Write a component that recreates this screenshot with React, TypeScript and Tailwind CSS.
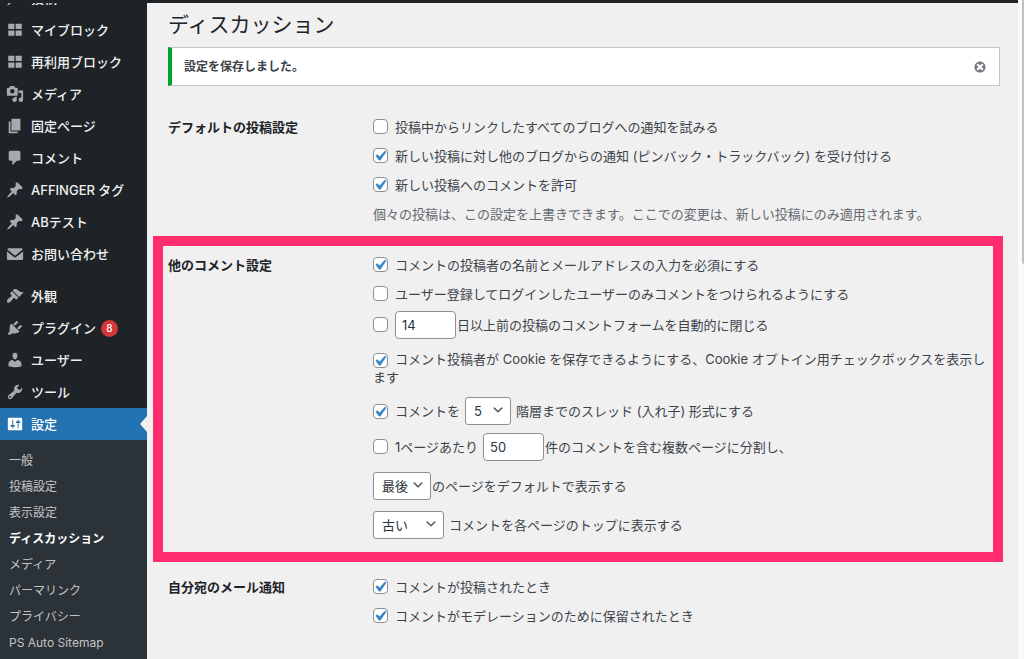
import type { ReactNode } from 'react';

const icons = {
  pin: 'M10.44 3.02l1.82-1.82 6.36 6.35-1.83 1.82c-1.05-.68-2.48-.57-3.41.36l-.75.75c-.92.93-1.04 2.35-.35 3.41l-1.83 1.82-2.41-2.41-2.8 2.79c-.42.42-3.38 2.71-3.8 2.29s1.86-3.39 2.28-3.81l2.79-2.79L4.1 9.36l1.83-1.82c1.05.69 2.48.57 3.4-.36l.75-.75c.93-.92 1.05-2.35.36-3.41z',
  blocks: 'M2.5 3h6.8v6H2.5zM10.7 3h6.8v6h-6.8zM2.5 10.5h6.8v6H2.5zM10.7 10.5h6.8v6h-6.8z',
  media:
    'M13 11V4c0-.55-.45-1-1-1h-1.67L9 1H5L3.67 3H2c-.55 0-1 .45-1 1v7c0 .55.45 1 1 1h10c.55 0 1-.45 1-1zM7 4.5c1.38 0 2.5 1.12 2.5 2.5S8.38 9.5 7 9.5 4.5 8.38 4.5 7 5.62 4.5 7 4.5zM14 6h5v10.5c0 1.38-1.12 2.5-2.5 2.5S14 17.88 14 16.5s1.12-2.5 2.5-2.5c.17 0 .34.02.5.05V9h-3V6zm-4 8.05V13h2v3.5c0 1.38-1.12 2.5-2.5 2.5S7 17.88 7 16.5 8.12 14 9.5 14c.17 0 .34.02.5.05z',
  page: 'M6 15V2h10v13H6zm-1 1h8v2H3V5h2v11z',
  comment: 'M5 2h9c1.1 0 2 .9 2 2v7c0 1.1-.9 2-2 2h-2l-5 5v-5H5c-1.1 0-2-.9-2-2V4c0-1.1.9-2 2-2z',
  mail: 'M3.5 3.5h13c1.1 0 2 .7 2 1.6L10 12 1.5 5.1c0-.9.9-1.6 2-1.6zM1 7.1l9 7.2 9-7.2v8.1c0 .9-.7 1.6-1.6 1.6H2.6c-.9 0-1.6-.7-1.6-1.6z',
  brush:
    'M14.48 11.06L7.41 3.99l1.5-1.5c.5-.56 2.3-.47 3.51.32 1.21.8 1.43 1.28 2.91 2.1 1.18.64 2.45 1.26 4.45.85zm-.71.71L6.7 4.7 4.93 6.47c-.39.39-.39 1.02 0 1.41l1.06 1.06c.39.39.39 1.03 0 1.42-.6.6-1.43 1.11-2.21 1.69-.35.26-.7.53-1.01.84C1.43 14.23.4 16.08 1.4 17.07c.99 1 2.84-.03 4.18-1.36.31-.31.58-.66.85-1.02.57-.78 1.08-1.61 1.69-2.21.39-.39 1.02-.39 1.41 0l1.06 1.06c.39.39 1.02.39 1.41 0z',
  plug: 'M13.11 4.36L9.87 7.6 8 5.73l3.24-3.24c.35-.34 1.05-.2 1.56.32.52.51.66 1.21.31 1.55zm-8 1.77l.91-1.12 9.01 9.01-1.19.84c-.71.71-2.63 1.16-3.82 1.16H6.14L4.9 17.26c-.59.59-1.54.59-2.12 0-.59-.58-.59-1.53 0-2.12l1.24-1.24v-3.88c0-1.13.4-3.19 1.09-3.89zm7.26 3.97l3.24-3.24c.34-.35 1.04-.21 1.55.31.52.51.66 1.21.31 1.55l-3.24 3.25z',
  user: 'M10 9.25c-2.27 0-2.73-3.44-2.73-3.44C7 4.02 7.82 2 9.97 2c2.16 0 2.98 2.02 2.71 3.81 0 0-.41 3.44-2.68 3.44zm0 2.57L12.72 10c2.39 0 4.52 2.33 4.52 4.53v2.49s-3.65 1.13-7.24 1.13c-3.65 0-7.24-1.13-7.24-1.13v-2.49c0-2.25 1.94-4.48 4.47-4.48z',
  wrench:
    'M16.68 9.77c-1.34 1.34-3.3 1.67-4.95.99l-5.41 6.52c-.99.99-2.59.99-3.58 0s-.99-2.59 0-3.57l6.52-5.42c-.68-1.65-.35-3.61.99-4.95 1.28-1.28 3.12-1.62 4.72-1.06l-2.89 2.89 2.82 2.82 2.86-2.87c.53 1.58.18 3.39-1.08 4.65zM3.81 16.21c.4.39 1.04.39 1.43 0 .4-.4.4-1.04 0-1.43-.39-.4-1.03-.4-1.43 0-.39.39-.39 1.03 0 1.43z',
  sliders:
    'M18 16V4c0-.55-.45-1-1-1H3c-.55 0-1 .45-1 1v12c0 .55.45 1 1 1h14c.55 0 1-.45 1-1zM8 11h1c.55 0 1 .45 1 1s-.45 1-1 1H8v1.5c0 .28-.22.5-.5.5s-.5-.22-.5-.5V13H6c-.55 0-1-.45-1-1s.45-1 1-1h1V5.5c0-.28.22-.5.5-.5s.5.22.5.5V11zm5-2h-1c-.55 0-1-.45-1-1s.45-1 1-1h1V5.5c0-.28.22-.5.5-.5s.5.22.5.5V7h1c.55 0 1 .45 1 1s-.45 1-1 1h-1v5.5c0 .28-.22.5-.5.5s-.5-.22-.5-.5V9z',
  dismiss:
    'M10 2c4.42 0 8 3.58 8 8s-3.58 8-8 8-8-3.58-8-8 3.58-8 8-8zm5 11l-3-3 3-3-2-2-3 3-3-3-2 2 3 3-3 3 2 2 3-3 3 3z',
};

type IconName = keyof typeof icons;

function Icon({ name, className }: { name: IconName; className: string }) {
  return (
    <svg viewBox="0 0 20 20" className={className} fill="currentColor" fillRule="evenodd" aria-hidden="true">
      <path d={icons[name]} />
    </svg>
  );
}

type MenuEntry = { icon: IconName; label: string; badge?: number };

const contentMenu: MenuEntry[] = [
  { icon: 'blocks', label: 'マイブロック' },
  { icon: 'blocks', label: '再利用ブロック' },
  { icon: 'media', label: 'メディア' },
  { icon: 'page', label: '固定ページ' },
  { icon: 'comment', label: 'コメント' },
  { icon: 'pin', label: 'AFFINGER タグ' },
  { icon: 'pin', label: 'ABテスト' },
  { icon: 'mail', label: 'お問い合わせ' },
];

const siteMenu: MenuEntry[] = [
  { icon: 'brush', label: '外観' },
  { icon: 'plug', label: 'プラグイン', badge: 8 },
  { icon: 'user', label: 'ユーザー' },
  { icon: 'wrench', label: 'ツール' },
];

const submenu = ['一般', '投稿設定', '表示設定', 'ディスカッション', 'メディア', 'パーマリンク', 'プライバシー', 'PS Auto Sitemap'];

function MenuItem({ icon, label, badge }: MenuEntry) {
  return (
    <a href="#" className="flex h-8 shrink-0 items-center pl-[6px] font-medium text-[#f0f0f1]">
      <Icon name={icon} className="mr-[7px] size-[18px] shrink-0 text-[#a7aaad]" />
      {label}
      {badge !== undefined && (
        <span className="ml-[5px] flex size-[17px] items-center justify-center rounded-full bg-[#d63638] text-[10px] text-white">
          {badge}
        </span>
      )}
    </a>
  );
}

function Sidebar() {
  return (
    <nav aria-label="メインメニュー" className="flex w-[147px] shrink-0 flex-col bg-[#1d2327]">
      <div className="flex h-[11px] flex-col justify-end overflow-hidden">
        <MenuItem icon="pin" label="投稿" />
      </div>
      {contentMenu.map((item) => (
        <MenuItem key={item.label} {...item} />
      ))}
      <div className="h-[10px]" />
      {siteMenu.map((item) => (
        <MenuItem key={item.label} {...item} />
      ))}
      <a href="#" className="relative flex h-8 items-center bg-[#2271b1] pl-[6px] font-medium text-white">
        <Icon name="sliders" className="mr-[7px] size-[18px] shrink-0" />
        設定
        <svg viewBox="0 0 7 16" className="absolute top-2 right-0 h-4 w-[7px]" fill="#f0f0f1" aria-hidden="true">
          <path d="M7 0v16L0 8z" />
        </svg>
      </a>
      <div className="flex grow flex-col bg-[#2c3338] pt-2 text-xs">
        {submenu.map((label) =>
          label === 'ディスカッション' ? (
            <a key={label} href="#" aria-current="page" className="flex h-[26px] items-center pl-[9px] font-bold text-white">
              {label}
            </a>
          ) : (
            <a key={label} href="#" className="flex h-[26px] items-center pl-[9px] text-[#c3c4c7]">
              {label}
            </a>
          ),
        )}
      </div>
    </nav>
  );
}

function Tick({ checked, label }: { checked?: boolean; label?: string }) {
  return (
    <span className="relative mr-[7px] inline-block size-[15px] shrink-0 align-middle">
      <input
        type="checkbox"
        defaultChecked={checked}
        aria-label={label}
        className="peer block size-[15px] appearance-none rounded-[4px] border border-[#8c8f94] bg-white"
      />
      <svg
        viewBox="0 0 20 20"
        className="pointer-events-none absolute -top-[2px] -left-[3px] hidden size-5 peer-checked:block"
        fill="#3582c4"
        aria-hidden="true"
      >
        <path d="M14.83 4.89l1.34.94-5.81 8.38H9.02L5.78 9.67l1.34-1.25 2.57 2.4z" stroke="#3582c4" strokeWidth="0.4" />
      </svg>
    </span>
  );
}

function CheckRow({ checked, children }: { checked?: boolean; children: ReactNode }) {
  return (
    <label className="flex h-[29px] items-center">
      <Tick checked={checked} />
      {children}
    </label>
  );
}

function NumberBox({ value, label }: { value: string; label: string }) {
  return (
    <input
      type="text"
      inputMode="numeric"
      defaultValue={value}
      aria-label={label}
      className="mr-px h-7 w-[61px] rounded-[4px] border border-[#8c8f94] bg-white px-[6px] text-[#2c3338]"
    />
  );
}

function Dropdown({ options, label, className }: { options: string[]; label: string; className: string }) {
  return (
    <span className="relative inline-block">
      <select
        aria-label={label}
        className={`block h-7 appearance-none rounded-[3px] border border-[#8c8f94] bg-white pl-2 text-[#2c3338] ${className}`}
      >
        {options.map((o) => (
          <option key={o}>{o}</option>
        ))}
      </select>
      <svg viewBox="0 0 20 20" className="pointer-events-none absolute top-[6px] right-[6px] size-[14px]" fill="#555" aria-hidden="true">
        <path d="M5 6l5 5 5-5 2 1-7 7-7-7 2-1z" />
      </svg>
    </span>
  );
}

function Section({ title, className, children }: { title: string; className: string; children: ReactNode }) {
  return (
    <section className={`relative grid grid-cols-[205px_1fr] pr-2 ${className}`}>
      <h2 className="flex h-[29px] items-center font-bold text-[#1d2327]">{title}</h2>
      <div>{children}</div>
    </section>
  );
}

export default function App() {
  return (
    <div className="flex min-h-screen bg-[#f0f0f1] font-[Inter,'Noto_Sans_CJK_JP',sans-serif] text-[13px] leading-[18px] text-[#3c434a]">
      <div className="flex min-w-0 grow flex-col">
        <header className="h-[3px] bg-[#1d2327]" />
        <div className="flex grow">
          <Sidebar />
          <main className="min-w-0 grow pr-[18px] pl-[21px]">
            <h1 className="flex h-11 items-center text-[21px] text-[#1d2327]">ディスカッション</h1>
            <div className="flex h-[39px] items-center justify-between border border-l-4 border-[#c3c4c7] border-l-[#00a32a] bg-white px-3">
              <p className="text-xs font-bold">設定を保存しました。</p>
              <button type="button" aria-label="この通知を非表示にする" className="text-[#787c82]">
                <Icon name="dismiss" className="size-[14px]" />
              </button>
            </div>

            <form>
              <Section title="デフォルトの投稿設定" className="pt-[26px] pb-2">
                <CheckRow>投稿中からリンクしたすべてのブログへの通知を試みる</CheckRow>
                <CheckRow checked>新しい投稿に対し他のブログからの通知 (ピンバック・トラックバック) を受け付ける</CheckRow>
                <CheckRow checked>新しい投稿へのコメントを許可</CheckRow>
                <p className="flex h-[29px] items-center text-[#646970]">
                  個々の投稿は、この設定を上書きできます。ここでの変更は、新しい投稿にのみ適用されます。
                </p>
              </Section>

              <Section title="他のコメント設定" className="pt-[14px] pb-[18px]">
                <CheckRow checked>コメントの投稿者の名前とメールアドレスの入力を必須にする</CheckRow>
                <CheckRow>ユーザー登録してログインしたユーザーのみコメントをつけられるようにする</CheckRow>
                <div className="flex h-[33px] items-center">
                  <Tick label="コメントフォームを自動的に閉じる" />
                  <NumberBox value="14" label="日数" />
                  日以上前の投稿のコメントフォームを自動的に閉じる
                </div>
                <label className="block py-[9px]">
                  <Tick checked />
                  コメント投稿者が Cookie を保存できるようにする、Cookie オプトイン用チェックボックスを表示します
                </label>
                <div className="flex h-8 items-center">
                  <Tick checked label="スレッド形式にする" />
                  <span className="mr-[5px]">コメントを</span>
                  <Dropdown options={['5', '2', '3', '4']} label="階層" className="w-[46px]" />
                  <span className="ml-[5px]">階層までのスレッド (入れ子) 形式にする</span>
                </div>
                <div className="flex h-[39px] items-center">
                  <Tick label="複数ページに分割する" />
                  <span className="mr-[5px]">1ページあたり</span>
                  <NumberBox value="50" label="1ページあたりの件数" />
                  件のコメントを含む複数ページに分割し、
                </div>
                <div className="flex h-[39px] items-center">
                  <Dropdown options={['最後', '最初']} label="デフォルトのページ" className="w-[58px]" />
                  <span className="ml-px">のページをデフォルトで表示する</span>
                </div>
                <div className="flex h-[39px] items-center">
                  <Dropdown options={['古い', '新しい']} label="コメントの順序" className="w-[71px]" />
                  <span className="ml-[5px]">コメントを各ページのトップに表示する</span>
                </div>
                <div className="pointer-events-none absolute inset-y-0 -right-[3px] -left-[15px] border-10 border-[#ff2d6e]" />
              </Section>

              <Section title="自分宛のメール通知" className="pt-[10px]">
                <CheckRow checked>コメントが投稿されたとき</CheckRow>
                <CheckRow checked>コメントがモデレーションのために保留されたとき</CheckRow>
              </Section>
            </form>
          </main>
        </div>
      </div>
      <div className="flex w-[6px] shrink-0 justify-end bg-[#fafafa]" aria-hidden="true">
        <div className="h-[40vh] w-[2px] rounded-bl-sm bg-[#c1c1c1]" />
      </div>
    </div>
  );
}
